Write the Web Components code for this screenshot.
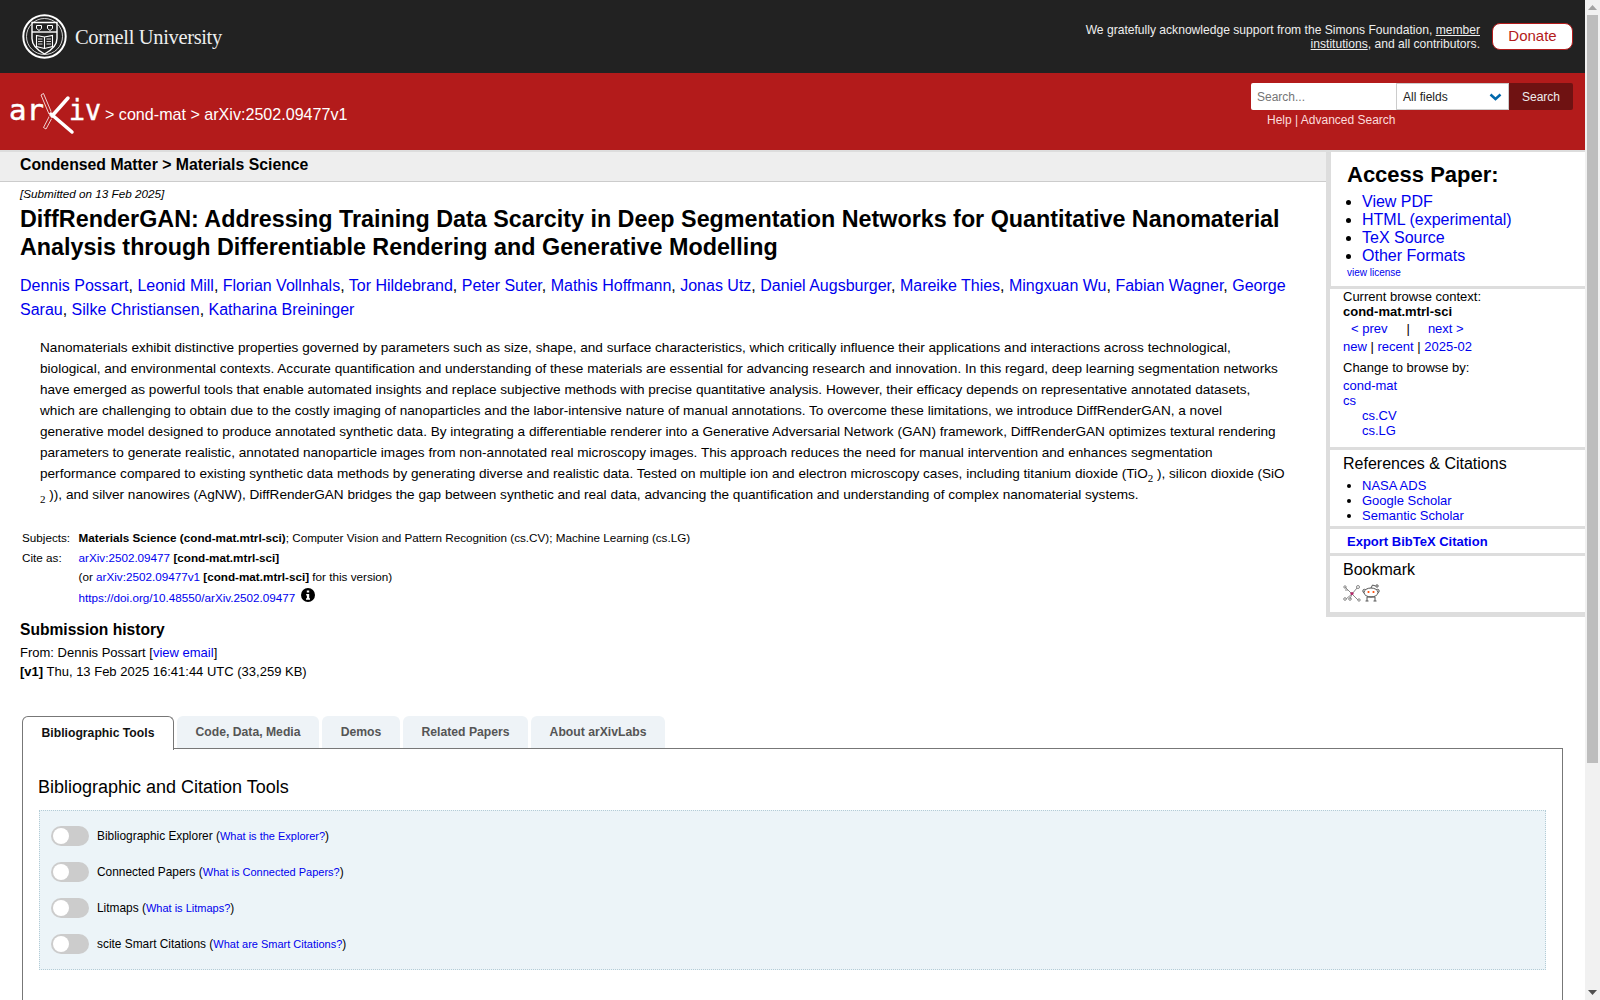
<!DOCTYPE html>
<html lang="en">
<head>
<meta charset="utf-8">
<title>DiffRenderGAN - arXiv</title>
<style>
html,body{margin:0;height:100%;overflow:hidden;}
body{display:flex;font-family:"Liberation Sans",Arial,sans-serif;color:#000;background:#fff;}
a{color:#0000ee;text-decoration:none;}
</style>
</head>
<body>
<abs-page>
  <cornell-banner></cornell-banner>
  <arxiv-header></arxiv-header>
  <abs-layout>
    <abs-main slot="main"></abs-main>
    <abs-sidebar slot="side"></abs-sidebar>
  </abs-layout>
  <labs-tabs></labs-tabs>
</abs-page>
<page-scrollbar></page-scrollbar>

<script>
'use strict';

// small helper so every element just declares its html
function define(tag, html){
    customElements.define(tag, class extends HTMLElement{
        constructor(){
            super();
            this.attachShadow({mode:'open'});
            this.shadowRoot.innerHTML = html;
        }
    });
}

define('abs-page', `<style>
:host{display:block;flex:1;min-width:0;height:100%;overflow:hidden;}
</style><slot></slot>`);

define('cornell-banner', `<style>
:host{display:flex;align-items:center;justify-content:space-between;height:73px;background:#222;color:#fff;padding:0 12px 0 22px;box-sizing:border-box;}
.brand{display:flex;align-items:center;gap:8px;margin-top:-1px;}
.word{font:20.500px "Liberation Serif",serif;letter-spacing:-.35px;color:#eee;margin-top:2px;}
.right{display:flex;align-items:center;gap:12px;}
p{margin:0;width:400px;font-size:12.100px;line-height:14px;text-align:right;color:#eee;}
a{color:#eee;text-decoration:underline;}
.donate{width:81px;height:27px;box-sizing:border-box;background:#fff;border:1px solid #b31b1b;border-radius:8px;color:#b31b1b;font-size:15px;line-height:24px;text-align:center;text-decoration:none;}
</style>
<div class="brand">
  <svg width="45" height="45" viewBox="0 0 45 45" fill="none" stroke="#fff">
    <circle cx="22.5" cy="22.5" r="21.2" stroke-width="2"/>
    <circle cx="22.5" cy="22.5" r="18" stroke-width=".8"/>
    <path d="M10 8.500h25v16c0 7-6 12-12.500 15.500C16 36.500 10 31.500 10 24.500z" stroke-width="1.400"/>
    <path d="M10 18h25" stroke-width="1.400"/>
    <path d="M14.500 11.500h5v3l-2.500 2-2.500-2zM25.500 11.500h5v3l-2.500 2-2.500-2z" stroke-width="1"/>
    <path d="M14.500 21.500l8 1.500 8-1.500v11l-8 2-8-2zM22.500 23v11.500" stroke-width="1.100"/>
    <path d="M16 25h4.500M16 27.500h4.500M16 30h4.500M24.500 25H29M24.500 27.500H29M24.500 30H29" stroke-width=".8"/>
  </svg>
  <span class="word">Cornell University</span>
</div>
<div class="right">
  <p>We gratefully acknowledge support from the Simons Foundation, <a href="#">member</a> <a href="#">institutions</a>, and all contributors.</p>
  <a class="donate" href="#">Donate</a>
</div>`);

define('arxiv-header', `<style>
:host{display:flex;justify-content:space-between;height:77px;background:#b31b1b;color:#fff;padding:0 12px 0 10px;box-sizing:border-box;}
.left{display:flex;align-items:flex-start;}
svg{display:block;margin-top:20px;}
.crumbs{font-size:16.100px;margin:32px 0 0 -1px;line-height:18px;white-space:pre;}
.search{padding-top:10px;width:322px;}
form{display:flex;height:27px;}
.q{width:145px;background:#fff;color:#757575;font-size:12px;line-height:29px;padding-left:6px;box-sizing:border-box;border-radius:2px 0 0 2px;}
.sel{width:113px;box-sizing:border-box;background:#fff;border:1px solid #ccc;color:#222;font-size:12px;line-height:27px;padding-left:6px;position:relative;}
.sel svg{position:absolute;right:6px;top:9px;margin:0;}
.btn{width:64px;background:#6f1212;color:#eee;font-size:12px;line-height:29px;text-align:center;border-radius:0 2px 2px 0;}
.links{font-size:12px;line-height:14px;margin:3px 0 0 16px;color:#fcdcdc;}
</style>
<div class="left">
  <svg width="96" height="42" viewBox="0 0 96 42" fill="none">
    <text x="-1" y="27" fill="#fff" stroke="#fff" stroke-width=".5" font-family="'DejaVu Sans Mono',monospace" font-size="29" textLength="35" lengthAdjust="spacingAndGlyphs">ar</text>
    <text x="59" y="27" fill="#fff" stroke="#fff" stroke-width=".5" font-family="'DejaVu Sans Mono',monospace" font-size="29" textLength="32" lengthAdjust="spacingAndGlyphs">iv</text>
    <path d="M31 2l2.500-1.500 8 19-2.500 1.500zM40 22l2.500 2-6.500 12-2.500-1.500z" stroke="#b31b1b" stroke-width="2.500" fill="#b31b1b"/>
    <path d="M31 2l2.500-1.500 8 19-2.500 1.500zM40 22l2.500 2-6.500 12-2.500-1.500z" stroke="#fff" stroke-width=".8"/>
    <path d="M41 21L62 39" stroke="#b31b1b" stroke-width="6.500"/>
    <path d="M58 5L42 23" stroke="#b31b1b" stroke-width="6.500"/>
    <path d="M41 21L62 39" stroke="#fff" stroke-width="3.500" stroke-linecap="round"/>
    <path d="M58 5L42 23" stroke="#fff" stroke-width="3.500" stroke-linecap="round"/>
  </svg>
  <div class="crumbs">&gt; cond-mat &gt; arXiv:2502.09477v1</div>
</div>
<div class="search">
  <form>
    <div class="q">Search...</div>
    <div class="sel">All fields
      <svg width="13" height="8" viewBox="0 0 13 8" fill="none"><path d="M1.500 1.500l5 4.500 5-4.500" stroke="#0068ac" stroke-width="2.500"/></svg>
    </div>
    <div class="btn">Search</div>
  </form>
  <div class="links">Help | Advanced Search</div>
</div>`);

define('abs-layout', `<style>
:host{display:grid;grid-template-columns:1326px 259px;border-top:2px solid #ddd;height:566px;box-sizing:border-box;}
</style><slot name="main"></slot><slot name="side"></slot>`);

define('abs-main', `<style>
:host{display:block;font-size:13.500px;}
a{color:#0000ee;text-decoration:none;}
.crumb{height:30px;box-sizing:border-box;background:#eee;border-bottom:1px solid #ccc;padding-left:20px;font-weight:700;font-size:15.800px;line-height:25px;}
.body{padding:0 20px;}
.date{font-style:italic;font-size:11.700px;line-height:14px;margin-top:5px;}
h1{font-size:23.320px;line-height:28px;margin:4px 0 0;font-weight:700;}
.authors{font-size:16px;line-height:24px;margin-top:13px;}
.abstract{margin:15px 0 0 20px;line-height:21px;font-size:13.600px;width:1246px;}
sub{font:11px "Liberation Serif",serif;}
.meta{display:grid;grid-template-columns:56.500px 1fr;grid-template-rows:20px 20px 18px 24px;margin:23px 0 0 2px;font-size:11.700px;line-height:20px;}
.meta div:nth-child(n+5):nth-child(-n+6){line-height:18px;}
.meta div:nth-child(n+7){line-height:24px;}
.info{display:inline-block;vertical-align:0;margin-left:2px;}
h2{font-size:15.600px;line-height:18px;margin:11px 0 0;}
.hist{font-size:13px;line-height:19px;margin-top:4px;}
</style>
<div class="crumb">Condensed Matter &gt; Materials Science</div>
<div class="body">
  <div class="date">[Submitted on 13 Feb 2025]</div>
  <h1>DiffRenderGAN: Addressing Training Data Scarcity in Deep Segmentation Networks for Quantitative Nanomaterial Analysis through Differentiable Rendering and Generative Modelling</h1>
  <div class="authors"><a href="#">Dennis Possart</a>, <a href="#">Leonid Mill</a>, <a href="#">Florian Vollnhals</a>, <a href="#">Tor Hildebrand</a>, <a href="#">Peter Suter</a>, <a href="#">Mathis Hoffmann</a>, <a href="#">Jonas Utz</a>, <a href="#">Daniel Augsburger</a>, <a href="#">Mareike Thies</a>, <a href="#">Mingxuan Wu</a>, <a href="#">Fabian Wagner</a>, <a href="#">George</a> <a href="#">Sarau</a>, <a href="#">Silke Christiansen</a>, <a href="#">Katharina Breininger</a></div>
  <div class="abstract">Nanomaterials exhibit distinctive properties governed by parameters such as size, shape, and surface characteristics, which critically influence their applications and interactions across technological, biological, and environmental contexts. Accurate quantification and understanding of these materials are essential for advancing research and innovation. In this regard, deep learning segmentation networks have emerged as powerful tools that enable automated insights and replace subjective methods with precise quantitative analysis. However, their efficacy depends on representative annotated datasets, which are challenging to obtain due to the costly imaging of nanoparticles and the labor-intensive nature of manual annotations. To overcome these limitations, we introduce DiffRenderGAN, a novel generative model designed to produce annotated synthetic data. By integrating a differentiable renderer into a Generative Adversarial Network (GAN) framework, DiffRenderGAN optimizes textural rendering parameters to generate realistic, annotated nanoparticle images from non-annotated real microscopy images. This approach reduces the need for manual intervention and enhances segmentation performance compared to existing synthetic data methods by generating diverse and realistic data. Tested on multiple ion and electron microscopy cases, including titanium dioxide (TiO<sub>2</sub> ), silicon dioxide (SiO <sub>2</sub> )), and silver nanowires (AgNW), DiffRenderGAN bridges the gap between synthetic and real data, advancing the quantification and understanding of complex nanomaterial systems.</div>
  <div class="meta">
    <div>Subjects:</div><div><b>Materials Science (cond-mat.mtrl-sci)</b>; Computer Vision and Pattern Recognition (cs.CV); Machine Learning (cs.LG)</div>
    <div>Cite as:</div><div><a href="#">arXiv:2502.09477</a> <b>[cond-mat.mtrl-sci]</b></div>
    <div></div><div>(or <a href="#">arXiv:2502.09477v1</a> <b>[cond-mat.mtrl-sci]</b> for this version)</div>
    <div></div><div><a href="#">https://doi.org/10.48550/arXiv.2502.09477</a> <svg class="info" width="14" height="14" viewBox="0 0 14 14"><circle cx="7" cy="7" r="7" fill="#000"/><path d="M5.800 2.500h2.400v2.100H5.800zM5.200 6h3v4.200h.8v1.500H5v-1.500h.9V7.500h-.7z" fill="#fff"/></svg></div>
  </div>
  <h2>Submission history</h2>
  <div class="hist">From: Dennis Possart [<a href="#">view email</a>]<br><b>[v1]</b> Thu, 13 Feb 2025 16:41:44 UTC (33,259 KB)</div>
</div>`);

define('abs-sidebar', `<style>
:host{display:block;align-self:start;border-left:4px solid #ddd;border-bottom:5px solid #ddd;box-sizing:border-box;font-size:13px;}
a{color:#0000ee;text-decoration:none;}
section{border-bottom:3px solid #ddd;padding-left:13px;box-sizing:border-box;}
ul{margin:0;padding:0 0 0 19px;}
.access{height:137px;border-left:1px solid #ddd;padding:10px 0 0 16px;}
.access h2{font-size:22px;line-height:26px;margin:0;}
.access ul{font-size:16px;line-height:18px;padding-left:15px;margin-top:5px;}
.access small{display:block;font-size:10px;line-height:12px;margin-top:2px;}
.browse{height:161px;line-height:15px;}
.nav{margin:1px 0 0 8px;line-height:18px;}
.nav span{margin:0 18px 0 19px;}
.rows{line-height:18px;}
.chg{margin-top:2px;line-height:20px;}
.tree{line-height:15px;}
.tree div{padding-left:19px;}
.refs{height:79px;padding-top:4px;}
h3{font-size:16px;font-weight:400;line-height:20px;margin:0;}
.refs ul{line-height:15px;margin-top:4px;}
.export{height:27px;padding-left:17px;font-weight:700;line-height:26px;}
.bm{height:56px;border-bottom:0;padding-top:4px;}
.icons{display:flex;gap:1px;margin-top:4px;}
</style>
<section class="access">
  <h2>Access Paper:</h2>
  <ul><li><a href="#">View PDF</a></li><li><a href="#">HTML (experimental)</a></li><li><a href="#">TeX Source</a></li><li><a href="#">Other Formats</a></li></ul>
  <small><a href="#">view license</a></small>
</section>
<section class="browse">
  <div>Current browse context:<br><b>cond-mat.mtrl-sci</b></div>
  <div class="nav"><a href="#">&lt; prev</a><span>|</span><a href="#">next &gt;</a></div>
  <div class="rows"><a href="#">new</a> | <a href="#">recent</a> | <a href="#">2025-02</a></div>
  <div class="chg">Change to browse by:</div>
  <div class="tree"><a href="#">cond-mat</a><br><a href="#">cs</a><div><a href="#">cs.CV</a><br><a href="#">cs.LG</a></div></div>
</section>
<section class="refs">
  <h3>References &amp; Citations</h3>
  <ul><li><a href="#">NASA ADS</a></li><li><a href="#">Google Scholar</a></li><li><a href="#">Semantic Scholar</a></li></ul>
</section>
<section class="export"><a href="#">Export BibTeX Citation</a></section>
<section class="bm">
  <h3>Bookmark</h3>
  <div class="icons">
    <svg width="18" height="18" viewBox="0 0 18 18" fill="none" stroke="#888" stroke-width="1">
      <path d="M2 3l7 7M3 15l6-5 6 6M9 10l5-6M5 6L2 6M7 15l2-5"/>
      <circle cx="2" cy="3" r="1.200"/><circle cx="15" cy="3" r="1.500"/><circle cx="2" cy="15" r="1.300"/><circle cx="7" cy="15" r="1.300"/><circle cx="16" cy="16" r="1.200"/>
      <circle cx="9" cy="9.500" r="1.600" fill="#b5296b" stroke="none"/>
    </svg>
    <svg width="19" height="18" viewBox="0 0 19 18" fill="none" stroke="#555" stroke-width="1">
      <circle cx="2.500" cy="7" r="1.700" fill="#fff"/><circle cx="15.500" cy="7" r="1.700" fill="#fff"/>
      <ellipse cx="9" cy="8.500" rx="7" ry="4.500" fill="#fff"/>
      <path d="M9 4l1.500-3 3 1"/><circle cx="15" cy="2" r="1.200"/>
      <path d="M5 13v4M13 13v4M5 13h8"/><path d="M3.500 17h3M11.500 17h3"/>
      <circle cx="6.500" cy="8" r="1.100" fill="#ff4500" stroke="none"/><circle cx="11.500" cy="8" r="1.100" fill="#ff4500" stroke="none"/>
    </svg>
  </div>
</section>`);

define('labs-toggle', `<style>
:host{display:flex;align-items:center;height:36px;font-size:11.900px;}
.sw{width:38px;height:20px;border-radius:10px;background:#ccc;position:relative;margin-right:8px;flex:none;}
.sw::before{content:"";position:absolute;left:2px;top:2px;width:16px;height:16px;border-radius:50%;background:#fff;}
::slotted(a){color:#0000ee;text-decoration:none;font-size:11px;}
</style><span class="sw"></span><span><slot></slot></span>`);

define('labs-tabs', `<style>
:host{display:block;margin-left:22px;width:1541px;}
.tabs{display:flex;gap:3px;height:33px;position:relative;z-index:1;}
.tab{height:32px;box-sizing:border-box;background:#eef3f7;border-radius:6px 6px 0 0;color:#555;font-size:12.200px;font-weight:700;line-height:32px;text-align:center;}
.on{height:34px;background:#fff;border:1px solid #777;border-bottom:0;color:#111;line-height:33px;}
.panel{border:1px solid #777;margin-top:-1px;height:400px;padding:1px 15px 1px 16px;}
h3{font-size:18px;font-weight:400;line-height:22px;margin:26px 0 0 -1px;}
.box{margin-top:12px;width:1507px;height:160px;box-sizing:border-box;background:#ecf4f8;border:1px dotted #b3ccd6;padding:7px 0 0 11px;}
</style>
<div class="tabs">
  <div class="tab on" style="width:152px">Bibliographic Tools</div>
  <div class="tab" style="width:142px">Code, Data, Media</div>
  <div class="tab" style="width:78px">Demos</div>
  <div class="tab" style="width:125px">Related Papers</div>
  <div class="tab" style="width:134px">About arXivLabs</div>
</div>
<div class="panel">
  <h3>Bibliographic and Citation Tools</h3>
  <div class="box"><slot></slot></div>
</div>`);

define('page-scrollbar', `<style>
:host{display:flex;flex-direction:column;align-items:center;width:15px;flex:none;height:100%;background:#f1f1f1;}
.b{height:15px;flex:none;display:flex;align-items:center;justify-content:center;}
.t{width:11px;height:748px;background:#bdbdbd;}
.s{flex:1;}
</style>
<div class="b"><svg width="9" height="5"><path d="M4.500 0L9 5H0z" fill="#a3a3a3"/></svg></div>
<div class="t"></div><div class="s"></div>
<div class="b"><svg width="9" height="5"><path d="M0 0h9L4.500 5z" fill="#505050"/></svg></div>`);

document.querySelector('labs-tabs').innerHTML =
    '<labs-toggle>Bibliographic Explorer (<a href="#">What is the Explorer?</a>)</labs-toggle>' +
    '<labs-toggle>Connected Papers (<a href="#">What is Connected Papers?</a>)</labs-toggle>' +
    '<labs-toggle>Litmaps (<a href="#">What is Litmaps?</a>)</labs-toggle>' +
    '<labs-toggle>scite Smart Citations (<a href="#">What are Smart Citations?</a>)</labs-toggle>';
</script>
</body>
</html>
